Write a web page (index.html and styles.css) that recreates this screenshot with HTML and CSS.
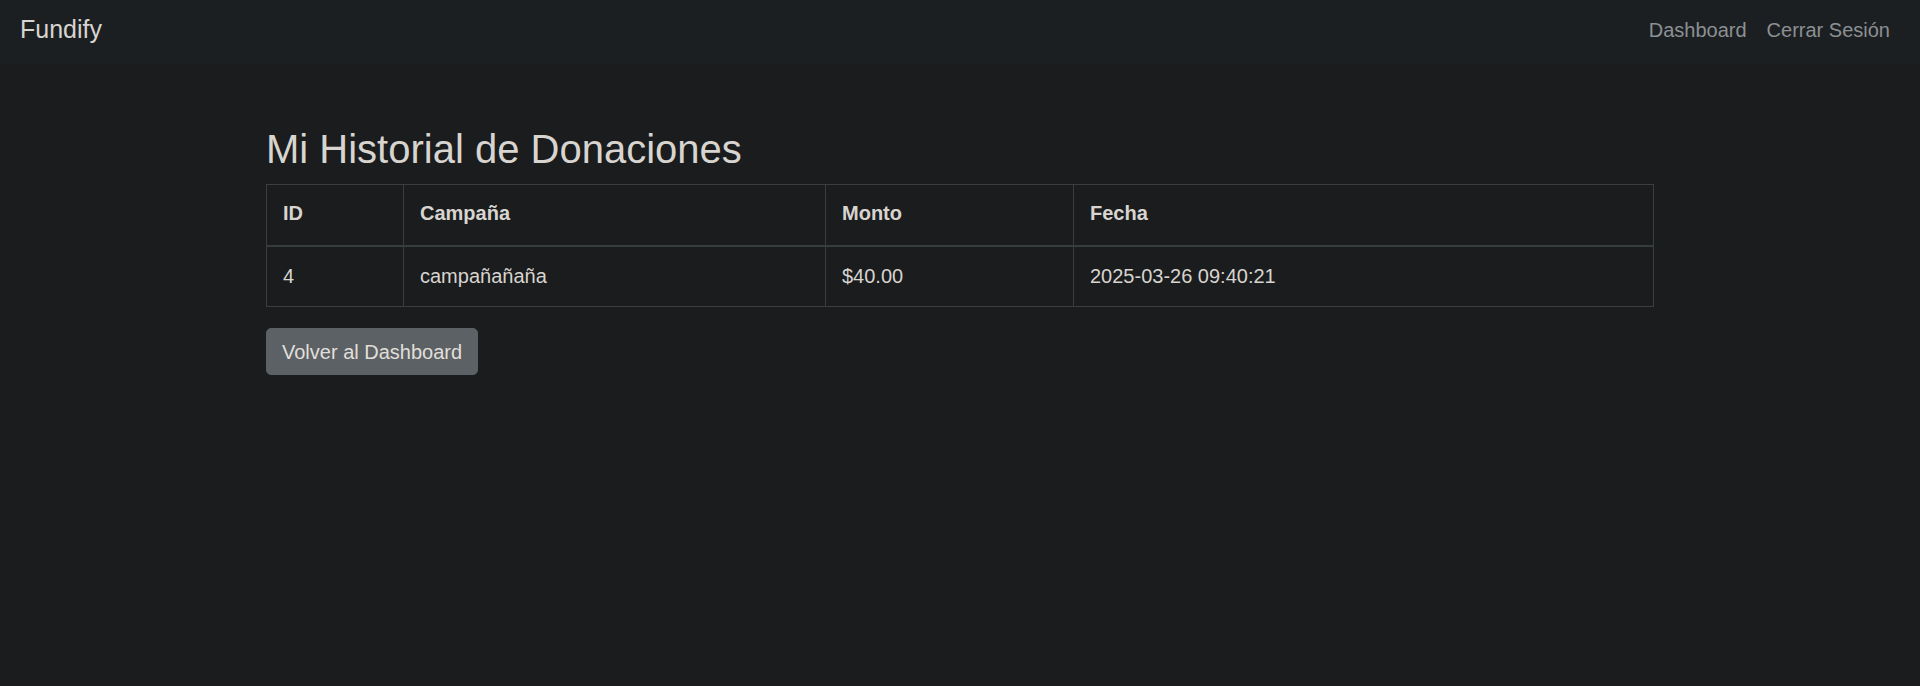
FILE: index.html
```html
<!DOCTYPE html>
<html lang="es">
<head>
<meta charset="utf-8">
<title>Fundify - Mi Historial de Donaciones</title>
<link rel="stylesheet" href="styles.css">
</head>
<body>
<nav class="navbar">
  <a class="brand" href="#">Fundify</a>
  <div class="nav-links">
    <a class="nav-link" href="#">Dashboard</a>
    <a class="nav-link" href="#">Cerrar Sesión</a>
  </div>
</nav>
<main class="container">
  <h1 class="title">Mi Historial de Donaciones</h1>
  <table class="history">
    <thead>
      <tr>
        <th class="col-id">ID</th>
        <th class="col-camp">Campaña</th>
        <th class="col-monto">Monto</th>
        <th class="col-fecha">Fecha</th>
      </tr>
    </thead>
    <tbody>
      <tr>
        <td>4</td>
        <td>campañañaña</td>
        <td>$40.00</td>
        <td>2025-03-26 09:40:21</td>
      </tr>
    </tbody>
  </table>
  <a class="btn" href="#">Volver al Dashboard</a>
</main>
</body>
</html>
```
FILE: styles.css
```css
* { box-sizing: border-box; }
html, body { margin: 0; padding: 0; }
body {
  background: #1a1c1e;
  color: #d8d4cf;
  font-family: "Liberation Sans", Arial, sans-serif;
  font-size: 20px;
  line-height: 1.5;
  height: 686px;
}
a { text-decoration: none; }
.navbar {
  display: flex;
  align-items: flex-start;
  justify-content: space-between;
  height: 64px;
  padding: 0 20px;
  background: #1c1f21;
}
.brand {
  color: #d8d4cf;
  font-size: 25px;
  line-height: 37px;
  padding-top: 11px;
}
.nav-links {
  display: flex;
  padding-top: 15px;
}
.nav-link {
  color: #8b9094;
  font-size: 20px;
  line-height: 30px;
  padding: 0 10px;
}
.nav-link:last-child { padding-right: 10px; }
.container {
  max-width: 1388px;
  margin: 0 auto;
  padding-top: 61px;
}
.title {
  margin: 0 0 11px 0;
  font-size: 40px;
  font-weight: 400;
  line-height: 48px;
  color: #d8d4cf;
}
.history {
  width: 100%;
  border-collapse: collapse;
  border: 1px solid #3a3e41;
  margin-bottom: 21px;
}
.history th, .history td {
  border: 1px solid #3a3e41;
  padding: 16px;
  text-align: left;
  vertical-align: top;
  line-height: 27px;
}
.history th {
  font-weight: 700;
  padding: 15px 16px 18px;
}
.history thead th { border-bottom: 2px solid #353d3d; }
.col-id { width: 137px; }
.col-camp { width: 422px; }
.col-monto { width: 248px; }
.btn {
  display: inline-block;
  background: #5b6164;
  border: 1px solid #5b6164;
  border-radius: 5px;
  color: #e2dfda;
  padding: 7.5px 15px;
  line-height: 30px;
  font-size: 20px;
}
```
